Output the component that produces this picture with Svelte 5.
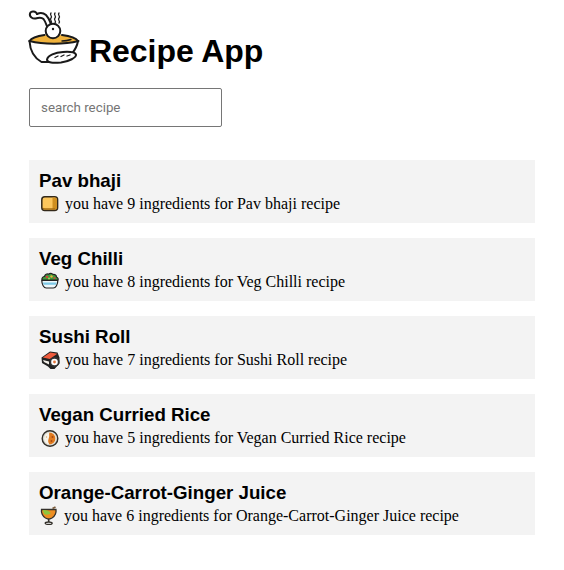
<script>
  const recipes = [
    { title: 'Pav bhaji', count: 9, icon: 'bread' },
    { title: 'Veg Chilli', count: 8, icon: 'salad' },
    { title: 'Sushi Roll', count: 7, icon: 'sushi' },
    { title: 'Vegan Curried Rice', count: 5, icon: 'curry' },
    { title: 'Orange-Carrot-Ginger Juice', count: 6, icon: 'drink' }
  ];
</script>

<main class="page">
  <header class="brand">
    <svg class="logo" viewBox="28 9 52 55" aria-hidden="true">
      <path d="M29.500 41c2-3 8-5 16-6h17c8 1 14 3 16 6-14 3-35 3-49 0z" fill="#f0b23c"/>
      <g fill="none" stroke="#1a1a1a" stroke-width="2" stroke-linecap="round" stroke-linejoin="round">
        <path d="M29.500 41c.5 9 5 17 12 21h19c8-2.500 16-12 17.500-21"/>
        <path d="M29.500 41c2-3 8-5 15-6M62 35c8 1 14 3 16 6"/>
        <path d="M29.500 41c14 3.500 35 3.500 49 0"/>
        <path d="M37 14c-1-3-6-3.500-7-.5-1 3.500 3 5.500 5.500 5 3-1 6-1.500 8 .5 2 2.500 3 6 4 8.500"/>
        <path d="M37 14c3-1.500 6-1.500 9 1 2.500 2.500 4 6 5 9"/>
        <circle cx="53" cy="31" r="7.300" fill="#fff"/>
        <path d="M51 13c-2 2 2 3 0 5s2 3 0 5M55 13c-2 2 2 3 0 5s2 3 0 5M59 13c-2 2 2 3 0 5s2 3 0 5" stroke-width="1.300"/>
        <path d="M62 41c3 0 6-.5 9-1.500" stroke-width="1.400"/>
        <path d="M47 59.500c1-4 8-7 16-7.500 7-.5 12 .5 13 2.500 .5 3-7 7-15 8-8 .5-14 .5-14-3z" fill="#fff"/>
        <path d="M55 57.500l3-1.500M61 56.500l3-1.500M67 56l3-1" stroke-width="1.300"/>
      </g>
      <circle cx="53" cy="29" r="1.200" fill="#1a1a1a"/>
    </svg>
    <h1>Recipe App</h1>
  </header>

  <input class="search" type="text" placeholder="search recipe" />

  <section class="list">
    {#each recipes as r}
      <article class="card">
        <h3>{r.title}</h3>
        <p class="line">
          {#if r.icon === 'bread'}
            <svg class="emoji" viewBox="0 0 20 20" aria-hidden="true">
              <rect x=".8" y="2.800" width="15.800" height="13.700" rx="3" fill="#fcc65c" stroke="#33291a" stroke-width="1.500"/>
              <path d="M11.500 3.500h2.500q2 0 2 2v8q0 2-2 2h-2.500z" fill="#cf8f20"/>
              <path d="M1.500 13.500q0 2.300 2.500 2.300h10v-1.500h-10q-1.500 0-2.500-.8z" fill="#a86f14"/>
            </svg>
          {:else if r.icon === 'salad'}
            <svg class="emoji" viewBox="0 0 20 20" aria-hidden="true">
              <path d="M1 8c-.5-2 1-3.500 2.500-3.500C4 2.500 6 1.500 7.500 2.200c1.500-1.200 3.500-1 4.500.3 2-.5 3.500 1 3.500 2.500 1.300.5 2 2 1.500 3z" fill="#3f9a3a" stroke="#222" stroke-width="1.200"/>
              <circle cx="6" cy="5" r="1.300" fill="#d0463a"/><circle cx="10.500" cy="4.500" r="1.200" fill="#e8b23a"/><circle cx="13.500" cy="6" r="1.100" fill="#d0463a"/><circle cx="8" cy="6.500" r="1" fill="#9fd85a"/>
              <path d="M.8 8.500h16c0 4-2 7.500-4.500 7.500h-7c-2.500 0-4.500-3.500-4.500-7.500z" fill="#eef8fb" stroke="#222" stroke-width="1.200"/>
              <path d="M1.800 10.500h14l-.9 2.300h-12.200z" fill="#7cc8e6"/>
            </svg>
          {:else if r.icon === 'sushi'}
            <svg class="emoji" viewBox="0 0 20 20" aria-hidden="true">
              <path d="M.5 7.500l8.500-6 7.500 1 2 5v6l-5 5.500h-4l-2.500-2.500-6-3.500z" fill="#222"/>
              <path d="M1.800 7.500l7.500-5 7 1.200-7.500 5.300z" fill="#ef5b3d"/>
              <path d="M2 10l6 1.500v3l-5-2.500z" fill="#f4f1ea"/>
              <circle cx="13.500" cy="12" r="5" fill="#333"/>
              <circle cx="13.500" cy="12" r="3.300" fill="#fff"/>
              <circle cx="13.500" cy="12" r="1.400" fill="#e3743a"/>
            </svg>
          {:else if r.icon === 'curry'}
            <svg class="emoji" viewBox="0 0 20 20" aria-hidden="true">
              <circle cx="9" cy="10.500" r="7.800" fill="#d8d8d0" stroke="#33302a" stroke-width="1.400"/>
              <circle cx="9" cy="10.500" r="5.900" fill="#f7f4ea"/>
              <path d="M8.500 4.600a5.900 5.900 0 0 1 0 11.800c-1-2-2-3-.8-6s-.2-4 .8-5.800z" fill="#e07a1f"/>
              <circle cx="11.500" cy="9" r="1" fill="#a84a12"/><circle cx="10.500" cy="13" r=".9" fill="#a84a12"/><circle cx="5.500" cy="9" r=".7" fill="#d9b27a"/>
            </svg>
          {:else}
            <svg class="emoji drink" viewBox="0 0 20 20" aria-hidden="true">
              <path d="M1.500 3.500h14.500c.5 3-1 7-4 8.500l-2 .8h-2.500l-2-.8c-3-1.500-4.500-5.500-4-8.500z" fill="#ee8e22" stroke="#33302a" stroke-width="1.300"/>
              <path d="M2.800 4.200c3-.5 6 .5 8 3-2 1.500-4.500 1.800-6.500 1z" fill="#8cc63f"/>
              <path d="M12.500 2.500l3-1.500" stroke="#7a5a3a" stroke-width="1.800"/>
              <path d="M8.700 13v3" stroke="#33302a" stroke-width="1.600" fill="none"/>
              <ellipse cx="8.700" cy="17.200" rx="3.500" ry="1.200" fill="#fff" stroke="#33302a" stroke-width="1.300"/>
            </svg>
          {/if}
          <span>you have {r.count} ingredients for {r.title} recipe</span>
        </p>
      </article>
    {/each}
  </section>
</main>

<style>
  :global(body) { margin: 0; background: #fff; }
  .page { padding: 9px 29px 0; }
  .brand { display: flex; align-items: flex-end; height: 61px; margin-left: -1px; }
  .logo { width: 52px; height: 55px; flex: none; margin: 0 9px 6px 0; }
  h1 { margin: 0; font: bold 32px/37px "Liberation Sans", sans-serif; color: #000; letter-spacing: -0.05px; }
  .search {
    display: block; box-sizing: border-box; width: 193px; height: 39px;
    margin-top: 18px; padding: 0 11px;
    border: 1px solid #767676; border-radius: 2px;
    font: 13.333px "Roboto", sans-serif; background: #fff;
  }
  .search::placeholder { color: #757575; opacity: 1; }
  .list { display: flex; flex-direction: column; gap: 15px; margin-top: 33px; width: 506px; }
  .card { box-sizing: border-box; height: 63px; padding: 10px 10px 0; background: #f3f3f3; }
  h3 { margin: 0; font: bold 18.72px/21px "Liberation Sans", sans-serif; color: #000; }
  .line { margin: 3px 0 0; display: flex; align-items: flex-start; gap: 4px; font: 16px/20px "Liberation Serif", serif; color: #000; }
  .emoji { width: 20px; height: 20px; flex: none; margin-left: 2px; }
  .drink { margin-left: 1px; }
</style>
